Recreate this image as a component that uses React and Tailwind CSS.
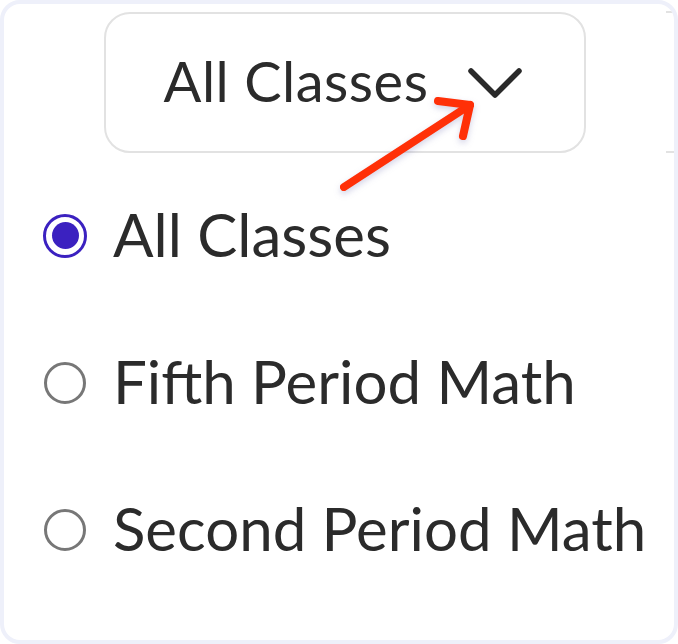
import React, { useState } from 'react';

const classes = ['All Classes', 'Fifth Period Math', 'Second Period Math'];

const Radio = ({ checked }) =>
  checked ? (
    <span className="w-[44px] h-[44px] rounded-full border-[3px] border-[#3b21c0] flex items-center justify-center shrink-0">
      <span className="w-[27px] h-[27px] rounded-full bg-[#3b21c0]" />
    </span>
  ) : (
    <span className="w-[42px] h-[42px] ml-[1px] mr-[1px] rounded-full border-[3px] border-[#777777] shrink-0" />
  );

export default function App() {
  const [selected, setSelected] = useState('All Classes');

  return (
    <div className="w-[678px] h-[644px] bg-white" style={{ fontFamily: 'Lato, "Liberation Sans", sans-serif' }}>
      <div className="relative w-full h-full rounded-[20px] border-4 border-[#eef0fa] overflow-hidden text-[#2b2b2b]">
        {/* edge of the neighbouring tab strip */}
        <div className="absolute left-[662px] top-[7px] w-[40px] h-[142px] border-y-2 border-[#e2e2e2]" />

        <div className="pt-[8px] pl-[100px]">
          <button className="w-[482px] h-[141px] rounded-[26px] border-2 border-[#e2e2e2] flex items-center justify-center gap-[40px] pb-[4px] pr-[4px]">
            <span className="text-[56px] leading-none tracking-[0.5px]">All Classes</span>
            <svg width="54" height="32" viewBox="0 0 54 32" className="mt-[4px]">
              <path d="M3 4 L27 28 L51 4" fill="none" stroke="#2a2a2a" strokeWidth="5.5" strokeLinecap="round" strokeLinejoin="round" />
            </svg>
          </button>
        </div>

        <ul className="pl-[39px] pt-[9px]">
          {classes.map((c) => (
            <li key={c} className="h-[147px] flex items-center gap-[26px] cursor-pointer" onClick={() => setSelected(c)}>
              <Radio checked={selected === c} />
              <span className="text-[60px] leading-none pb-[4px]">{c}</span>
            </li>
          ))}
        </ul>

        {/* pointer arrow */}
        <svg className="absolute left-[-4px] top-[-4px] drop-shadow-[0_3px_3px_rgba(80,80,160,0.25)]" width="678" height="644" viewBox="0 0 678 644">
          <g fill="none" stroke="#ff3008" strokeWidth="8" strokeLinecap="round" strokeLinejoin="round">
            <path d="M344 187 L470 105" />
            <path d="M438 101 L470 105 L463 136" />
          </g>
        </svg>
      </div>
    </div>
  );
}
